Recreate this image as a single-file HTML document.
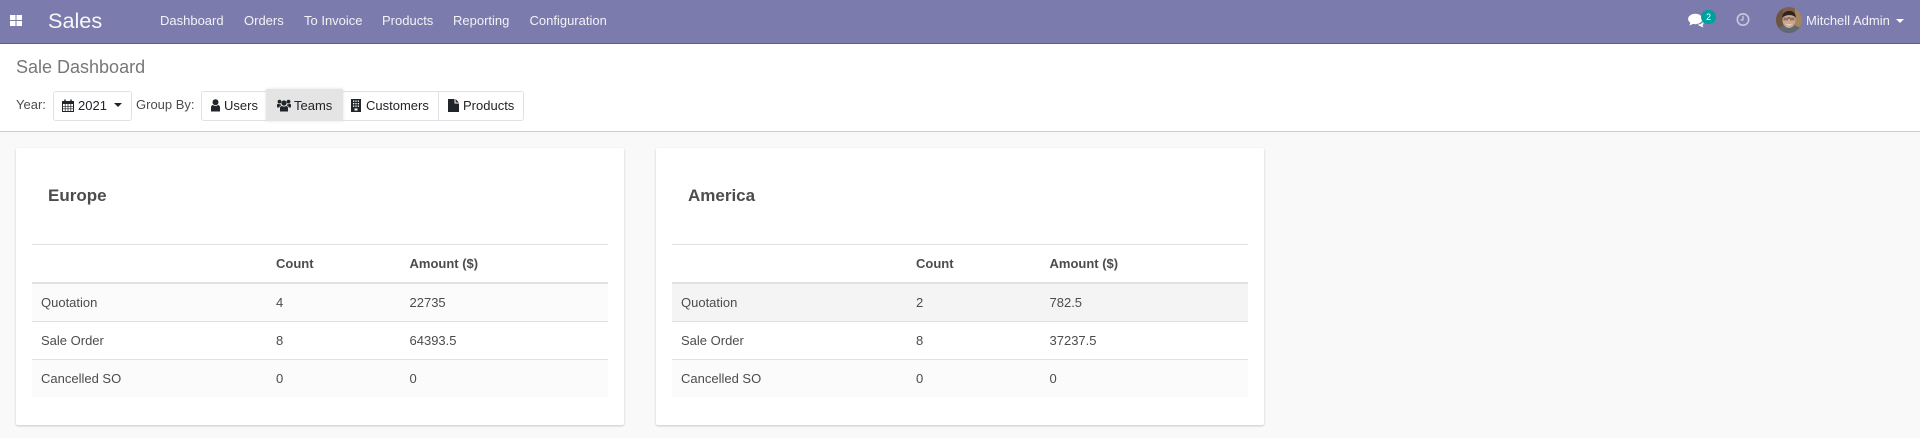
<!DOCTYPE html>
<html>
<head>
<meta charset="utf-8">
<style>
html,body{margin:0;padding:0;width:1920px;height:438px;overflow:hidden;background:#f9f9f9;font-family:"Liberation Sans",sans-serif;font-size:13px;color:#4c4c4c}
.a{position:absolute;white-space:nowrap;line-height:16px}
#nav{position:absolute;left:0;top:0;width:1920px;height:43px;background:#7c7bad;border-bottom:1px solid #5f5e8a}
#nav .m{color:rgba(255,255,255,.9);top:13px}
#cp{position:absolute;left:0;top:44px;width:1920px;height:87px;background:#fff;border-bottom:1px solid #ccc}
.btn{position:absolute;top:91px;height:28px;background:#fff;border:1px solid #dee2e6;box-sizing:content-box}
.t{color:#212529;top:98px}
.card{position:absolute;top:148px;width:608px;height:277px;background:#fff;border-radius:2px;box-shadow:0 1px 2px rgba(0,0,0,.2)}
.card h3{position:absolute;left:32px;top:38px;margin:0;font-size:17px;line-height:20px;font-weight:bold;color:#4c4c4c}
.l{position:absolute;left:16px;width:576px}
.b{font-weight:bold}
</style>
</head>
<body>
<div id="nav">
  <svg class="a" style="left:10px;top:15px" width="12" height="11" viewBox="0 0 12 11"><g fill="#fff"><rect x="0" y="0" width="5.5" height="5"/><rect x="6.5" y="0" width="5.5" height="5"/><rect x="0" y="6" width="5.5" height="5"/><rect x="6.5" y="6" width="5.5" height="5"/></g></svg>
  <div class="a" style="left:48px;top:8px;font-size:21.67px;line-height:26px;color:#fff;opacity:.95">Sales</div>
  <div class="a m" style="left:160px">Dashboard</div>
  <div class="a m" style="left:244px">Orders</div>
  <div class="a m" style="left:304px">To Invoice</div>
  <div class="a m" style="left:382px">Products</div>
  <div class="a m" style="left:453px">Reporting</div>
  <div class="a m" style="left:529.5px">Configuration</div>
  <svg class="a" style="left:1688px;top:13px" width="17" height="15" viewBox="0 0 17 15"><g fill="#fff"><ellipse cx="7.300" cy="6" rx="7.200" ry="5.200"/><path d="M2.500 9L1.500 12.500L6 10.500Z"/><path d="M10 11.500C12 11.500 14 10.500 15 9C16 10 15.500 11.500 14.500 12L15.500 14.500L12 13C11 13 10.500 12.500 10 11.500Z"/></g></svg>
  <div class="a" style="left:1701px;top:10px;width:15px;height:14px;border-radius:7px;background:#00a09d;color:#fff;font-size:9px;line-height:14px;text-align:center">2</div>
  <svg class="a" style="left:1736px;top:12px" width="14" height="15" viewBox="0 0 14 15"><circle cx="7" cy="7.500" r="5.700" fill="none" stroke="#c9c8dd" stroke-width="1.600"/><path d="M7 3.800V8H4.400" fill="none" stroke="#c9c8dd" stroke-width="1.300"/></svg>
  <svg class="a" style="left:1776px;top:7px" width="26" height="26" viewBox="0 0 26 26"><defs><clipPath id="c"><circle cx="13" cy="13" r="13"/></clipPath></defs><g clip-path="url(#c)"><rect width="26" height="26" fill="#7f6149"/><rect x="0" y="0" width="7" height="26" fill="#6e5340"/><rect x="19" y="0" width="7" height="26" fill="#a5855f"/><path d="M2 26V21L9 18H18L25 21V26Z" fill="#5f6a70"/><ellipse cx="13" cy="13" rx="6.500" ry="8" fill="#cfa78e"/><path d="M6.300 11C5 2 21 1 19.700 11C18 7.500 10 7 6.300 11Z" fill="#2f2420"/><path d="M7.500 10.500H12V13.500H7.500ZM14 10.500H18.500V13.500H14Z" fill="#8c7568"/><path d="M12 11H14" stroke="#3d302a" stroke-width="1"/><path d="M9.500 16.500Q13 18.500 16.500 16.500Q13 20.500 9.500 16.500Z" fill="#f2e6de"/></g></svg>
  <div class="a" style="left:1806px;top:13px;color:rgba(255,255,255,.9)">Mitchell Admin</div>
  <div class="a" style="left:1896px;top:19px;width:0;height:0;border-left:4px solid transparent;border-right:4px solid transparent;border-top:4px solid #fff"></div>
</div>

<div id="cp"></div>
<div class="a" style="left:16px;top:57px;font-size:18px;line-height:20px;color:#777">Sale Dashboard</div>
<div class="a" style="left:16px;top:97px;color:#4c4c4c">Year:</div>
<div class="btn" style="left:53px;width:77px;border-radius:3px"></div>
<svg class="a" style="left:62px;top:99px" width="12" height="13" viewBox="0 0 12 13"><path d="M0.500 2.500H11.500V12.500H0.500Z" fill="none" stroke="#212529"/><path d="M0.500 2.500H11.500V5H0.500Z" fill="#212529"/><path d="M3 .5V3M9 .5V3" stroke="#212529" stroke-width="1.500"/><path d="M3.200 5V12M6 5V12M8.800 5V12M1 7.300H11M1 9.800H11" stroke="#212529" stroke-width=".7"/></svg>
<div class="a t" style="left:78px">2021</div>
<div class="a" style="left:114px;top:103px;width:0;height:0;border-left:4px solid transparent;border-right:4px solid transparent;border-top:4px solid #212529"></div>
<div class="a" style="left:136px;top:97px;color:#4c4c4c">Group By:</div>

<div class="btn" style="left:201px;width:321px;border-radius:3px"></div>
<div class="a" style="left:266px;top:89px;width:77px;height:32px;background:#e4e4e4;box-shadow:0 0 3px rgba(0,0,0,.12)"></div>
<div class="a" style="left:438px;top:92px;width:1px;height:28px;background:#dee2e6"></div>
<svg class="a" style="left:211px;top:99px" width="9" height="13" viewBox="0 0 9 13"><circle cx="4.500" cy="3.300" r="3" fill="#212529"/><path d="M0 12.500V8.500C0 7 1 6 2 6C3.500 7.300 5.500 7.300 7 6C8 6 9 7 9 8.500V12.500Z" fill="#212529"/></svg>
<div class="a t" style="left:224px">Users</div>
<svg class="a" style="left:277px;top:99px" width="14" height="13" viewBox="0 0 14 13"><g fill="#212529"><circle cx="7" cy="4" r="2.600"/><circle cx="2.500" cy="2.600" r="1.900"/><circle cx="11.500" cy="2.600" r="1.900"/><path d="M3 12.500V9C3 7.500 4 7 5 7C6 7.800 8 7.800 9 7C10 7 11 7.500 11 9V12.500Z"/><path d="M0 8V6C0 5 .8 4.800 1.500 4.800C2 5.300 3 5.400 3.500 5.200C3.800 6 4 6.300 4.200 6.600C3 6.800 2.300 7.500 2.200 8.500H0.500Z"/><path d="M14 8V6C14 5 13.200 4.800 12.500 4.800C12 5.300 11 5.400 10.500 5.200C10.200 6 10 6.300 9.800 6.600C11 6.800 11.700 7.500 11.800 8.500H13.500Z"/></g></svg>
<div class="a t" style="left:294px">Teams</div>
<svg class="a" style="left:351px;top:99px" width="10" height="13" viewBox="0 0 10 13"><rect width="10" height="13" fill="#212529"/><g fill="#fff"><rect x="2" y="1.500" width="1.300" height="1.300"/><rect x="4.300" y="1.500" width="1.300" height="1.300"/><rect x="6.700" y="1.500" width="1.300" height="1.300"/><rect x="2" y="4" width="1.300" height="1.300"/><rect x="4.300" y="4" width="1.300" height="1.300"/><rect x="6.700" y="4" width="1.300" height="1.300"/><rect x="2" y="6.500" width="1.300" height="1.300"/><rect x="4.300" y="6.500" width="1.300" height="1.300"/><rect x="6.700" y="6.500" width="1.300" height="1.300"/><rect x="3.500" y="9.500" width="3" height="2"/></g></svg>
<div class="a t" style="left:366px">Customers</div>
<svg class="a" style="left:447.500px;top:99px" width="11" height="13" viewBox="0 0 11 13"><path d="M0 0H6.500V4.500H11V13H0ZM7.500 0L11 3.500H7.500Z" fill="#212529"/></svg>
<div class="a t" style="left:463px">Products</div>

<div class="card" style="left:16px">
  <h3>Europe</h3>
  <div class="l" style="top:96px;height:1px;background:#dee2e6"></div>
  <div class="l" style="top:134px;height:2px;background:#dee2e6"></div>
  <div class="l" style="top:136px;height:37px;background:#fbfbfb"></div>
  <div class="l" style="top:173px;height:1px;background:#dee2e6"></div>
  <div class="l" style="top:211px;height:1px;background:#dee2e6"></div>
  <div class="l" style="top:212px;height:37px;background:#fbfbfb"></div>
  <div class="a b" style="left:260px;top:108px">Count</div><div class="a b" style="left:393.500px;top:108px">Amount ($)</div>
  <div class="a" style="left:25px;top:147px">Quotation</div><div class="a" style="left:260px;top:147px">4</div><div class="a" style="left:393.500px;top:147px">22735</div>
  <div class="a" style="left:25px;top:185px">Sale Order</div><div class="a" style="left:260px;top:185px">8</div><div class="a" style="left:393.500px;top:185px">64393.5</div>
  <div class="a" style="left:25px;top:223px">Cancelled SO</div><div class="a" style="left:260px;top:223px">0</div><div class="a" style="left:393.500px;top:223px">0</div>
</div>

<div class="card" style="left:656px">
  <h3>America</h3>
  <div class="l" style="top:96px;height:1px;background:#dee2e6"></div>
  <div class="l" style="top:134px;height:2px;background:#dee2e6"></div>
  <div class="l" style="top:136px;height:37px;background:#f4f4f4"></div>
  <div class="l" style="top:173px;height:1px;background:#dee2e6"></div>
  <div class="l" style="top:211px;height:1px;background:#dee2e6"></div>
  <div class="l" style="top:212px;height:37px;background:#fbfbfb"></div>
  <div class="a b" style="left:260px;top:108px">Count</div><div class="a b" style="left:393.500px;top:108px">Amount ($)</div>
  <div class="a" style="left:25px;top:147px">Quotation</div><div class="a" style="left:260px;top:147px">2</div><div class="a" style="left:393.500px;top:147px">782.5</div>
  <div class="a" style="left:25px;top:185px">Sale Order</div><div class="a" style="left:260px;top:185px">8</div><div class="a" style="left:393.500px;top:185px">37237.5</div>
  <div class="a" style="left:25px;top:223px">Cancelled SO</div><div class="a" style="left:260px;top:223px">0</div><div class="a" style="left:393.500px;top:223px">0</div>
</div>
</body>
</html>
